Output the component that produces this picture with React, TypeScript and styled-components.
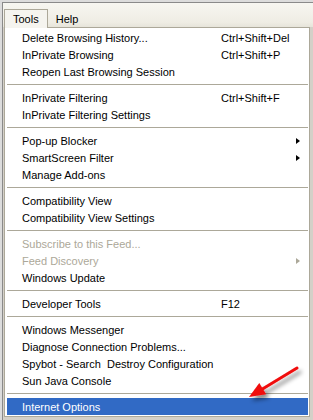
import React from 'react'
import styled, { createGlobalStyle } from 'styled-components'

const GlobalStyle = createGlobalStyle`
  html, body {
    margin: 0;
    padding: 0;
    background: #d4d0c8;
  }
  body {
    font-family: "Liberation Sans", Arial, sans-serif;
    font-size: 11px;
  }
`

const Frame = styled.div`
  position: relative;
  width: 313px;
  height: 420px;
  box-sizing: border-box;
  overflow: hidden;
  background: #d4d0c8;
  border-top: 2px solid #dcdcdc;
  border-left: 2px solid #dcdcdc;
`

const Inner = styled.div`
  display: flex;
  flex-direction: column;
  height: 100%;
  border-top: 1px solid #8a8a8a;
  border-left: 1px solid #8a8a8a;
`

const MenuBar = styled.div`
  display: flex;
  align-items: flex-end;
  height: 24px;
  padding-left: 1px;
  background: linear-gradient(#f7f6f1, #efede4 80%, #e6e4da);
`

const MenuTitle = styled.div<{ $open?: boolean }>`
  box-sizing: border-box;
  height: 19px;
  line-height: 18px;
  padding: 0 ${({ $open }) => ($open ? '8px' : '7px')};
  color: #000;
  background: ${({ $open }) => ($open ? '#f5f4ef' : 'transparent')};
  border: 1px solid ${({ $open }) => ($open ? '#aca899' : 'transparent')};
  border-bottom: none;
  margin-bottom: -1px;
  position: relative;
  z-index: 1;
`

const Dropdown = styled.div`
  margin-left: 1px;
  margin-right: 3px;
  background: #fff;
  border: 1px solid #aca899;
  padding: 1px 0 1px 2px;
`

const Item = styled.div<{ $disabled?: boolean; $active?: boolean }>`
  display: grid;
  grid-template-columns: 199px 1fr 12px;
  align-items: center;
  height: 17px;
  padding-left: 15px;
  margin-right: 1px;
  white-space: pre;
  color: ${({ $disabled, $active }) => ($active ? '#fff' : $disabled ? '#aca899' : '#000')};
  background: ${({ $active }) => ($active ? '#316ac5' : 'transparent')};
`

const Shortcut = styled.span`
  grid-column: 2;
`

const SubArrow = styled.span<{ $disabled?: boolean }>`
  grid-column: 3;
  width: 0;
  height: 0;
  border-top: 3.5px solid transparent;
  border-bottom: 3.5px solid transparent;
  border-left: 4px solid ${({ $disabled }) => ($disabled ? '#aca899' : '#000')};
`

const Separator = styled.div`
  height: 1px;
  margin: 4px 1px 4px 0;
  background: #aca899;
`

const Pointer = styled.svg`
  position: absolute;
  left: 236px;
  top: 356px;
  pointer-events: none;
`

type Entry =
  | { sep: true }
  | { label: string; shortcut?: string; sub?: boolean; disabled?: boolean; active?: boolean }

const entries: Entry[] = [
  { label: 'Delete Browsing History...', shortcut: 'Ctrl+Shift+Del' },
  { label: 'InPrivate Browsing', shortcut: 'Ctrl+Shift+P' },
  { label: 'Reopen Last Browsing Session' },
  { sep: true },
  { label: 'InPrivate Filtering', shortcut: 'Ctrl+Shift+F' },
  { label: 'InPrivate Filtering Settings' },
  { sep: true },
  { label: 'Pop-up Blocker', sub: true },
  { label: 'SmartScreen Filter', sub: true },
  { label: 'Manage Add-ons' },
  { sep: true },
  { label: 'Compatibility View' },
  { label: 'Compatibility View Settings' },
  { sep: true },
  { label: 'Subscribe to this Feed...', disabled: true },
  { label: 'Feed Discovery', disabled: true, sub: true },
  { label: 'Windows Update' },
  { sep: true },
  { label: 'Developer Tools', shortcut: 'F12' },
  { sep: true },
  { label: 'Windows Messenger' },
  { label: 'Diagnose Connection Problems...' },
  { label: 'Spybot - Search  Destroy Configuration' },
  { label: 'Sun Java Console' },
  { sep: true },
  { label: 'Internet Options', active: true },
]

export default function App() {
  return (
    <>
      <GlobalStyle />
      <Frame>
        <Inner>
          <MenuBar>
            <MenuTitle $open>Tools</MenuTitle>
            <MenuTitle>Help</MenuTitle>
          </MenuBar>
          <Dropdown>
            {entries.map((e, i) =>
              'sep' in e ? (
                <Separator key={i} />
              ) : (
                <Item key={i} $disabled={e.disabled} $active={e.active}>
                  <span>{e.label}</span>
                  {e.shortcut && <Shortcut>{e.shortcut}</Shortcut>}
                  {e.sub && <SubArrow $disabled={e.disabled} />}
                </Item>
              )
            )}
          </Dropdown>
        </Inner>
        {/* red callout arrow */}
        <Pointer width="70" height="50" viewBox="236 356 70 50">
          <defs>
            <filter id="shadow" x="-30%" y="-30%" width="160%" height="160%">
              <feDropShadow dx="3" dy="4" stdDeviation="2" floodColor="#000" floodOpacity="0.45" />
            </filter>
          </defs>
          <g filter="url(#shadow)">
            <line x1="295" y1="366" x2="258" y2="388.5" stroke="#f00a0a" strokeWidth="3" strokeLinecap="round" />
            <polygon points="247,395 257.3,381.1 264.1,392.3" fill="#f00a0a" />
          </g>
        </Pointer>
      </Frame>
    </>
  )
}
